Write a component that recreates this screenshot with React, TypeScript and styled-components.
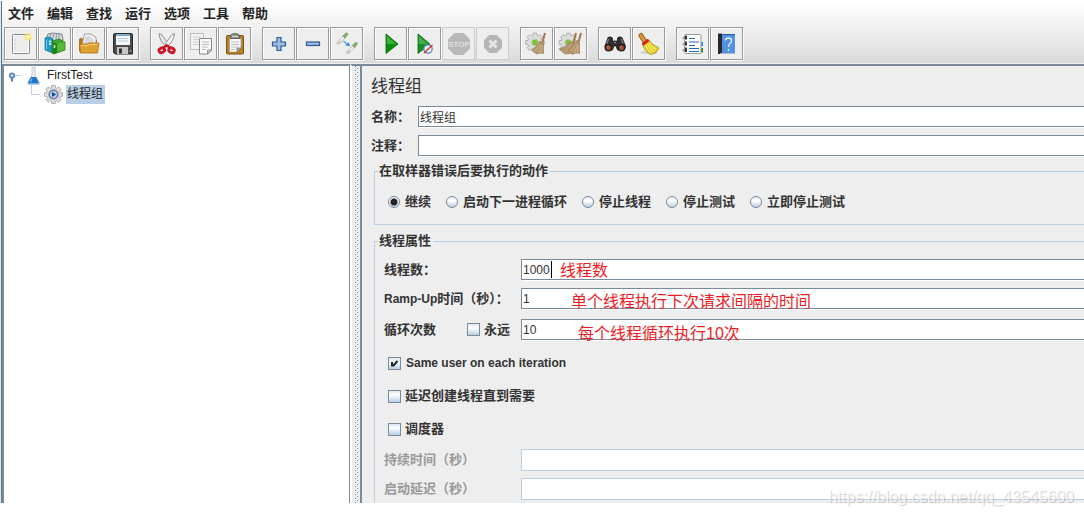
import React from "react";
import styled, { createGlobalStyle } from "styled-components";

const line = "#7a8a99";
const pale = "#b8cfe5";

const Global = createGlobalStyle`
  * { box-sizing: border-box; }
  body {
    margin: 0;
    background: #fff;
    color: #333;
    font: 13px/20px "Liberation Sans", "Noto Sans CJK SC", sans-serif;
  }
`;

const Frame = styled.div`
  position: relative;
  margin: 1px 0 12px;
  border-left: 1px solid #dfe8f0;
`;

const Window = styled.div`
  border-left: 1px solid #5f7487;
  overflow: hidden;
`;

const Header = styled.header`
  background: linear-gradient(#fff, #f2f2f2 40%, #dadada);
  border-bottom: 1px solid #eee;
`;

const MenuBar = styled.nav`
  display: flex;
  gap: 13px;
  height: 25px;
  padding: 1px 6px;
`;

const MenuItem = styled.button`
  padding: 0;
  border: 0;
  background: none;
  color: #222;
  font: bold 13px/20px "Liberation Sans", "Noto Sans CJK SC", sans-serif;
`;

const ToolBar = styled.div`
  display: flex;
  gap: 10px;
  padding: 1px 2px 3px;
`;

const ToolGroup = styled.div`
  display: flex;
  gap: 1px;
  padding-right: 1px;
`;

const ToolButton = styled.button`
  width: 33px;
  height: 33px;
  padding: 0;
  border: 1px solid #999;
  background: #eee;
  box-shadow: inset 1px 1px 0 #fff, 1px 1px 0 #fff;
  &:disabled {
    border-color: #ccc;
    box-shadow: none;
  }
  svg { display: block; }
`;

const Workspace = styled.main`
  display: flex;
`;

const TreePane = styled.aside`
  flex: 0 0 348px;
  border: solid ${line};
  border-width: 2px 1px 0 2px;
  background: #fff;
`;

const TreeList = styled.ul`
  margin: 0;
  padding: 0;
  list-style: none;
`;

const TreeRow = styled.div<{ $depth: number }>`
  display: flex;
  align-items: center;
  height: 19px;
  padding-left: ${(p) => (p.$depth ? 25 : 0)}px;
  font-size: 12px;
  color: #222;
  svg { flex: none; }
`;

const NodeLabel = styled.span<{ $selected?: boolean }>`
  height: 19px;
  margin-left: 3px;
  padding: 0 2px 0 1px;
  line-height: 19px;
  background: ${(p) => (p.$selected ? pale : "transparent")};
`;

const Splitter = styled.div`
  flex: 0 0 10px;
  padding-left: 3px;
  border-top: 2px solid ${line};
  border-left: 2px solid #fff;
  background: #eee;
`;

const Dots = styled.div`
  width: 4px;
  height: 100%;
  background:
    linear-gradient(${line}, ${line}) 0 0 / 4px 4px,
    #eee;
  background:
    conic-gradient(from 270deg at 1px 1px, ${line} 25%, transparent 0) 0 0 / 4px 4px,
    conic-gradient(from 270deg at 1px 1px, ${line} 25%, transparent 0) 2px 2px / 4px 4px;
`;

const Editor = styled.section`
  flex: 1;
  min-width: 0;
  padding: 10px 0 0 9px;
  border: solid ${line};
  border-width: 2px 0 0 2px;
  background: #eee;
`;

const Title = styled.h1`
  margin: 0 0 8px;
  font-size: 17px;
  font-weight: 400;
  line-height: 22px;
`;

const Field = styled.div<{ $label: number; $gap: number }>`
  display: grid;
  grid-template-columns: ${(p) => p.$label}px 1fr;
  align-items: center;
  margin-bottom: ${(p) => p.$gap}px;
`;

const Label = styled.label<{ $muted?: boolean }>`
  font-weight: bold;
  white-space: nowrap;
  color: ${(p) => (p.$muted ? "#999" : "#333")};
`;

const Latin = styled.span`
  font-size: 12px;
`;

const InputWrap = styled.div`
  position: relative;
  display: flex;
`;

const TextInput = styled.input`
  flex: 1;
  min-width: 0;
  height: 21px;
  padding: 0 1px;
  border: 1px solid ${line};
  border-right: 0;
  border-radius: 0;
  outline: 0;
  background: #fff;
  box-shadow: 1px 1px 0 #fff;
  color: #333;
  font: 12px/18px "Liberation Sans", "Noto Sans CJK SC", sans-serif;
  &:disabled {
    height: 22px;
    border-color: ${pale};
    box-shadow: none;
  }
`;

const Caret = styled.span`
  position: absolute;
  top: 2px;
  left: 30px;
  width: 1px;
  height: 17px;
  background: #000;
`;

const Note = styled.span<{ $left: number; $top: number }>`
  position: absolute;
  top: ${(p) => p.$top}px;
  left: ${(p) => p.$left}px;
  color: #ed1c24;
  font-size: 16px;
  line-height: 20px;
  white-space: nowrap;
`;

const Group = styled.fieldset<{ $open?: boolean }>`
  min-width: 0;
  margin: 0 0 ${(p) => (p.$open ? 0 : 6)}px 3px;
  padding: 0;
  border: solid ${pale};
  border-width: ${(p) => (p.$open ? "1px 0 0 1px" : "1px 0 1px 1px")};
`;

const Legend = styled.legend`
  margin-left: 3px;
  padding: 0 2px 0 1px;
  font-weight: bold;
`;

const Choices = styled.div`
  display: flex;
  gap: 15px;
  padding: 11px 13px 12px;
`;

const Choice = styled.label<{ $gap: number }>`
  display: flex;
  align-items: center;
  gap: ${(p) => p.$gap}px;
  height: 20px;
  font-weight: bold;
  white-space: nowrap;
`;

const Radio = styled.input`
  appearance: none;
  width: 12px;
  height: 12px;
  margin: 0;
  border: 1px solid ${line};
  border-radius: 50%;
  background: linear-gradient(#e4eef7, #fff 40%, #b8cfe5);
  &:checked {
    background:
      radial-gradient(circle, #222 3px, transparent 4px),
      linear-gradient(#e4eef7, #fff 40%, #b8cfe5);
  }
`;

const Box = styled.input`
  appearance: none;
  width: 13px;
  height: 13px;
  margin: 0;
  border: 1px solid ${line};
  background: linear-gradient(#dce8f3, #fff 35%, #b8cfe5);
`;

const BoxWrap = styled.span`
  position: relative;
  display: flex;
  svg {
    position: absolute;
    inset: 0;
    pointer-events: none;
  }
`;

const Properties = styled.div`
  padding: 8px 0 3px 9px;
`;

const LoopLabel = styled.div`
  display: flex;
  gap: 31px;
`;

const Checks = styled.div`
  display: flex;
  flex-direction: column;
  gap: 13px;
  padding: 0 0 10px 4px;
`;

const Watermark = styled.div`
  position: absolute;
  right: 10px;
  bottom: -4px;
  color: rgba(255, 255, 255, 0.7);
  font-size: 16px;
  line-height: 20px;
  text-shadow: 1px 1px 1px rgba(0, 0, 0, 0.2);
`;

const gearPath = (cx: number, cy: number, r: number) => {
  const points: string[] = [];
  for (let i = 0; i < 8; i++) {
    const mid = (i * Math.PI) / 4;
    [[-0.3, r - 2.2], [-0.2, r], [0.2, r], [0.3, r - 2.2]].forEach(([a, d]) => {
      points.push(`${(cx + d * Math.cos(mid + a)).toFixed(2)} ${(cy + d * Math.sin(mid + a)).toFixed(2)}`);
    });
  }
  return `M${points.join("L")}Z`;
};

const Gear = ({ cx, cy, r, children }: { cx: number; cy: number; r: number; children: React.ReactNode }) => (
  <g>
    <path d={gearPath(cx, cy, r)} fill="#dcdcdc" stroke="#a3a3a3" strokeWidth="0.8" strokeLinejoin="round" />
    {children}
  </g>
);

const Broom = ({ x, wide }: { x: number; wide?: boolean }) => (
  <g transform={`translate(${x} 0)`}>
    <path d="M24 6L21 17" stroke="#a5774a" strokeWidth="2" />
    <path
      d={wide ? "M19 14L22.500 17L22 27L18 26.500L13 27L7 22Q15 20 19 14Z" : "M19 14L22.500 16L22.500 26.500L19 26L15.500 27L10.500 23Q16 20 19 14Z"}
      fill="#b4956c"
      stroke="#94754c"
      strokeWidth="0.6"
    />
    <path d="M19.500 17L13.500 25M20.500 18L17.500 26M21.500 18L20.500 26" stroke="#d5bc95" strokeWidth="0.7" />
  </g>
);

const Dropper = ({ x, y }: { x: number; y: number }) => (
  <g transform={`translate(${x} ${y})`}>
    <path d="M1 12L1.500 10L7 4L9 6L3.500 11.500Z" fill="#f3f3ee" stroke="#aaa" strokeWidth="0.7" />
    <path d="M1.500 12L3.500 9L5.500 9.500L3.500 11.500Z" fill="#bdbbaa" />
    <path d="M7 3.500L9.500 6" stroke="#7a8f72" strokeWidth="1.200" />
    <path d="M9 3.800L10.500 2.300" stroke="#7fb068" strokeWidth="3.400" strokeLinecap="round" />
  </g>
);

const octagon = (r: number) => {
  const k = r * 0.42;
  return `M${17 - k} ${17 - r}H${17 + k}L${17 + r} ${17 - k}V${17 + k}L${17 + k} ${17 + r}H${17 - k}L${17 - r} ${17 + k}V${17 - k}Z`;
};

const icons: Record<string, React.ReactNode> = {
  new: (
    <>
      <rect x="8.500" y="7.500" width="17" height="19" rx="1" fill="#ededed" stroke="#8c8c8c" />
      <path d="M9.500 8.500V25.500H24.500V9" fill="none" stroke="#fff" />
      <path d="M10.500 13h1M10.500 17h1M10.500 21h1" stroke="#aaa" />
      <circle cx="24" cy="10" r="4" fill="#f7ee6c" opacity="0.5" />
      <circle cx="24" cy="10" r="2.500" fill="#f3e957" />
      <circle cx="24" cy="10" r="1.400" fill="#fffef0" />
    </>
  ),
  templates: (
    <>
      <path d="M8 12L10 7L15 6L24 7L25 13L15 16Z" fill="#d5dadb" stroke="#7c8688" />
      <path d="M11 12L13 7M14 13L16 7M18 12L18.500 7M21 12L21 7" stroke="#8b9799" />
      <path d="M7 11L11 10L15 12V26L7 23Z" fill="#1e9ac9" stroke="#0b6d98" strokeWidth="0.7" />
      <path d="M8.500 12.500V22.500" stroke="#73d0ef" />
      <path d="M11 14.500H13.500M11 17H13.500" stroke="#e8fbff" strokeWidth="1.400" />
      <path d="M14 14L21 12L27 15V23L16 27L14 26Z" fill="#3da72b" stroke="#1d7214" strokeWidth="0.7" />
      <path d="M14.500 15L19 17V25.500L16 26.500L14.500 26Z" fill="#1f8016" />
      <path d="M16.500 18V21" stroke="#d5f3c9" strokeWidth="1.500" />
      <path d="M19.500 16.500L26.500 15.500V22.500L19.500 25Z" fill="#55ba3c" />
    </>
  ),
  open: (
    <>
      <path d="M7.500 12L9 11L12 13H24.500V25.500H9L7.500 24Z" fill="#b87a15" stroke="#916012" strokeWidth="0.7" />
      <path d="M10 18L12.500 7H19L24 10.500L24 19Z" fill="#f7f7f7" stroke="#888" strokeWidth="0.8" />
      <path d="M13.500 10H19M13 12H21M12.500 14H21.500M12 16H22" stroke="#aaa" strokeWidth="0.8" />
      <path d="M7.500 17H15L17 16H27L25.500 26H8.500Z" fill="#dfa12f" stroke="#a96f12" strokeWidth="0.8" />
      <path d="M9 18.500H15.500L17.500 17.500H25.500" fill="none" stroke="#f4cd79" />
    </>
  ),
  save: (
    <>
      <path d="M7.500 8Q7.500 6.500 9 6.500H25Q26.500 6.500 26.500 8V27H9L7.500 25.500Z" fill="#4c4c4c" stroke="#2a2a2a" />
      <rect x="10" y="7" width="14" height="11" fill="#f0f6fb" />
      <path d="M10 8H24" stroke="#7cabce" strokeWidth="2" />
      <path d="M12 11.500H22M12 14H22" stroke="#bdcbd6" />
      <rect x="11" y="20" width="11" height="7" fill="#c7c7c7" />
      <rect x="13" y="21.500" width="3" height="5" fill="#333" />
      <rect x="23.500" y="23" width="2" height="2" fill="#888" />
    </>
  ),
  cut: (
    <>
      <path d="M9 6.500L11.500 7.500L18.500 17L16.500 20Q9.500 14 9 6.500Z" fill="#e7e7e7" stroke="#888" strokeWidth="0.9" />
      <path d="M24.500 6.500L22 7.500L15 17L17 20Q24 14 24.500 6.500Z" fill="#f4f4f4" stroke="#888" strokeWidth="0.9" />
      <ellipse cx="11.800" cy="23.300" rx="2.900" ry="2.200" fill="none" stroke="#cf1323" strokeWidth="2.800" transform="rotate(-28 11.800 23.300)" />
      <ellipse cx="21.500" cy="23.300" rx="2.900" ry="2.200" fill="none" stroke="#cf1323" strokeWidth="2.800" transform="rotate(28 21.500 23.300)" />
      <path d="M13.500 20.500L16.700 18.500L20 20.500" fill="none" stroke="#cf1323" strokeWidth="2.400" />
    </>
  ),
  copy: (
    <>
      <rect x="6.500" y="6.500" width="13" height="16" fill="#f5f5f5" stroke="#bbb" />
      <path d="M9 10H17M9 12.500H17M9 15H15M9 17.500H15" stroke="#ccc" />
      <path d="M15.500 11.500H27.500V23L23.500 27H15.500Z" fill="#f9f9f9" stroke="#888" />
      <path d="M27.500 23H23.500V27Z" fill="#ccc" stroke="#777" strokeWidth="0.7" />
      <path d="M18 15H25M18 17.500H25M18 20H24M18 22.500H22" stroke="#bbb" />
    </>
  ),
  paste: (
    <>
      <rect x="8.500" y="8.500" width="17" height="18.500" rx="1" fill="#bd801d" stroke="#7c510d" />
      <path d="M11.500 11.500H23V21L19 25H11.500Z" fill="#fafafa" stroke="#999" strokeWidth="0.7" />
      <path d="M23 21H19V25Z" fill="#bbb" stroke="#666" strokeWidth="0.7" />
      <path d="M13 15H21M13 17.500H21M13 20H20M13 22.500H17" stroke="#bbb" />
      <path d="M13 7.500Q17 5 21 7.500L22 11.500H12Z" fill="#8e948b" stroke="#555" strokeWidth="0.8" />
      <path d="M14 9.500H20" stroke="#d6d8d3" />
    </>
  ),
  plus: <path d="M15 10.500H19V15H23.500V19H19V23.500H15V19H10.500V15H15Z" fill="#9ebddf" stroke="#2a5899" strokeWidth="1.200" />,
  minus: <rect x="10.500" y="15" width="13" height="3.500" fill="#9ebddf" stroke="#2a5899" strokeWidth="1.200" />,
  toggle: (
    <>
      <Dropper x={6} y={5} />
      <Dropper x={15.5} y={14.5} />
      <path d="M13.500 14L17 17.200" stroke="#5ba3f2" strokeWidth="1.500" />
      <path d="M19.800 19.200L15.500 18.500L18.800 15.200Z" fill="#2c80ea" />
    </>
  ),
  start: (
    <>
      <path d="M12 7L24 17L12 26.500Z" fill="#078f0c" stroke="#046607" strokeWidth="0.8" />
      <path d="M12.800 9V17H22Z" fill="#3cb23d" />
    </>
  ),
  startNoPauses: (
    <>
      <path d="M10 7L22 17L10 26.500Z" fill="#14901c" stroke="#066b0a" strokeWidth="0.8" />
      <path d="M10.800 9V17H20Z" fill="#4cab4d" />
      <circle cx="20" cy="22" r="4.200" fill="#e8f1fb" stroke="#4a88c4" strokeWidth="1.300" />
      <path d="M16 26L24.500 18" stroke="#e0322b" strokeWidth="1.500" />
    </>
  ),
  stop: (
    <>
      <path d={octagon(11)} fill="#b8b8b8" />
      <text x="17" y="20" textAnchor="middle" fontSize="8" fontWeight="bold" fontFamily="Liberation Sans, sans-serif" fill="#dedede">STOP</text>
    </>
  ),
  shutdown: (
    <>
      <path d={octagon(9)} fill="#b5b5b5" />
      <path d="M13.500 13.500L20.500 20.500M20.500 13.500L13.500 20.500" stroke="#e6e6e6" strokeWidth="3" />
    </>
  ),
  clear: (
    <>
      <Gear cx={15} cy={15.5} r={9.5}><circle cx="15" cy="15.500" r="3.200" fill="#7cc22e" stroke="#b0c8a0" /></Gear>
      <Broom x={1} />
    </>
  ),
  clearAll: (
    <>
      <Gear cx={14.5} cy={15.5} r={9.5}><circle cx="14" cy="15.500" r="3" fill="#7cc22e" stroke="#b0c8a0" /></Gear>
      <Broom x={-2} wide />
      <Broom x={3} />
    </>
  ),
  search: (
    <>
      <path d="M7 19L10 10.500Q12.500 9 14.500 11V14H19.500V11Q21.500 9 24 10.500L27.500 19L26 23H19.500L18 19H16L14.500 23H8Z" fill="#303030" stroke="#181818" strokeWidth="0.7" />
      <path d="M10.500 12L9 17M23.500 12L25 17M16 15.500H18" stroke="#999" />
      <circle cx="10.500" cy="20.500" r="4" fill="#222" />
      <circle cx="23.500" cy="20.500" r="4" fill="#222" />
      <circle cx="10.500" cy="20.800" r="2.400" fill="#a45128" />
      <circle cx="23.500" cy="20.800" r="2.400" fill="#a45128" />
      <path d="M9 20L10.500 19M22 20L23.500 19" stroke="#e0a27d" />
    </>
  ),
  reset: (
    <>
      <ellipse cx="17" cy="25.500" rx="9" ry="1.800" fill="#d2d2d2" />
      <path d="M9 8.500L12.500 14" stroke="#9f6215" strokeWidth="5" strokeLinecap="round" />
      <path d="M9 8.500L12.500 14" stroke="#d99a3c" strokeWidth="3" strokeLinecap="round" />
      <path d="M10.500 17L16.500 12.500Q20 18 27 21Q25 26 19 27.500Q12 24 10.500 17Z" fill="#e6d02c" stroke="#a68d0e" strokeWidth="0.8" />
      <path d="M13.500 18Q16 23 19 26M15.500 17Q18 21 21.500 24.500M17 16Q20 20 24 22.500" fill="none" stroke="#fff59a" strokeWidth="0.9" />
      <path d="M10.500 17.500L16.500 13" stroke="#cf2a1c" strokeWidth="3" />
    </>
  ),
  log: (
    <>
      <path d="M25 15V19" stroke="#2c8dff" strokeWidth="4" />
      <path d="M25 21V25.500" stroke="#129313" strokeWidth="4" />
      <rect x="8.500" y="7.500" width="16.500" height="19" rx="1" fill="#fff" stroke="#999" />
      <path d="M13 11.500H19M13 15H23M13 18.500H19M13 21.500H23M13 24.500H23" stroke="#2566c2" />
      <path d="M6.500 11H10M6.500 17H10M6.500 23H10" stroke="#888" strokeWidth="1.500" />
      <path d="M10 8.500V12.500M10 14.500V18.500M10 20.500V25" stroke="#222" strokeWidth="1.800" />
    </>
  ),
  help: (
    <>
      <path d="M8 7H25V27H8Z" fill="#5292e0" />
      <path d="M8 6.500H12V27H8Z" fill="#242a33" />
      <path d="M12 7H25V8H12Z" fill="#2a5c9d" />
      <path d="M10 26.500H25" stroke="#aeb8c2" />
      <path d="M15.500 13.500Q15.500 11 18.500 11Q21.500 11 21.500 13.500Q21.500 15.500 20 16.500Q18.500 17.500 18.500 20M18.500 22V24" fill="none" stroke="#e7f1ff" strokeWidth="1.400" />
    </>
  ),
};

const toolGroups: [string, string][][] = [
  [["new", "新建"], ["templates", "模板"], ["open", "打开"], ["save", "保存"]],
  [["cut", "剪切"], ["copy", "复制"], ["paste", "粘贴"]],
  [["plus", "展开"], ["minus", "折叠"], ["toggle", "切换"]],
  [["start", "启动"], ["startNoPauses", "不停顿开始"], ["stop", "停止"], ["shutdown", "关闭"]],
  [["clear", "清除"], ["clearAll", "清除全部"]],
  [["search", "查找"], ["reset", "重置查找"]],
  [["log", "函数助手"], ["help", "帮助"]],
];

const menus = ["文件", "编辑", "查找", "运行", "选项", "工具", "帮助"];
const actions = ["继续", "启动下一进程循环", "停止线程", "停止测试", "立即停止测试"];

const RootIcon = () => (
  <svg width="39" height="19" viewBox="4 66 39 19">
    <path d="M12 78V81.500" stroke="#5f7ea6" strokeWidth="2" />
    <path d="M14 75.500H21" stroke={pale} />
    <circle cx="12" cy="75.500" r="2.200" fill="#dde8f5" stroke="#6382bf" strokeWidth="1.800" />
    <path d="M31.500 67.500H35.500M32 68V75L28 82Q27 84.500 29 84.500H38Q40 84.500 39 82L35 75V68" fill="#eef1f4" stroke="#b9c1c9" strokeWidth="0.9" />
    <path d="M31 77H36L39.200 83.500H27.800Z" fill="#1878d2" />
    <path d="M32 78.500L30.500 82" stroke="#80bff5" strokeWidth="1.200" />
  </svg>
);

const ThreadGroupIcon = () => (
  <svg width="34" height="19" viewBox="29 85 34 19">
    <path d="M31.500 85V94.500H40" fill="none" stroke={pale} />
    <Gear cx={53.5} cy={94.5} r={9.2}>
      <circle cx="53.500" cy="94.500" r="4.300" fill="#b9cce8" stroke="#6c7f9f" strokeWidth="1.600" />
      <path d="M52 92L56 94.500L52 97Z" fill="#15478c" />
    </Gear>
  </svg>
);

export default function App() {
  return (
    <>
      <Global />
      <Frame>
        <Window>
          <Header>
            <MenuBar>
              {menus.map((m) => (
                <MenuItem key={m}>{m}</MenuItem>
              ))}
            </MenuBar>
            <ToolBar>
              {toolGroups.map((group, i) => (
                <ToolGroup key={i}>
                  {group.map(([id, name]) => (
                    <ToolButton key={id} aria-label={name} disabled={id === "stop" || id === "shutdown"}>
                      <svg width="31" height="31" viewBox="1 1 31 31">{icons[id]}</svg>
                    </ToolButton>
                  ))}
                </ToolGroup>
              ))}
            </ToolBar>
          </Header>
          <Workspace>
            <TreePane>
              <TreeList>
                <li>
                  <TreeRow $depth={0}>
                    <RootIcon />
                    <NodeLabel>FirstTest</NodeLabel>
                  </TreeRow>
                  <TreeList>
                    <li>
                      <TreeRow $depth={1}>
                        <ThreadGroupIcon />
                        <NodeLabel $selected>线程组</NodeLabel>
                      </TreeRow>
                    </li>
                  </TreeList>
                </li>
              </TreeList>
            </TreePane>
            <Splitter>
              <Dots />
            </Splitter>
            <Editor>
              <Title>线程组</Title>
              <Field $label={47} $gap={8}>
                <Label htmlFor="name">名称：</Label>
                <InputWrap><TextInput id="name" defaultValue="线程组" /></InputWrap>
              </Field>
              <Field $label={47} $gap={5}>
                <Label htmlFor="comment">注释：</Label>
                <InputWrap><TextInput id="comment" /></InputWrap>
              </Field>
              <Group>
                <Legend>在取样器错误后要执行的动作</Legend>
                <Choices>
                  {actions.map((a, i) => (
                    <Choice key={a} $gap={5}>
                      <Radio type="radio" name="onError" defaultChecked={i === 0} />
                      {a}
                    </Choice>
                  ))}
                </Choices>
              </Group>
              <Group $open>
                <Legend>线程属性</Legend>
                <Properties>
                  <Field $label={137} $gap={8}>
                    <Label htmlFor="threads">线程数：</Label>
                    <InputWrap>
                      <TextInput id="threads" defaultValue="1000" />
                      <Caret />
                      <Note $left={39} $top={2}>线程数</Note>
                    </InputWrap>
                  </Field>
                  <Field $label={137} $gap={10}>
                    <Label htmlFor="ramp"><Latin>Ramp-Up</Latin>时间（秒）：</Label>
                    <InputWrap>
                      <TextInput id="ramp" defaultValue="1" />
                      <Note $left={50} $top={4}>单个线程执行下次请求间隔的时间</Note>
                    </InputWrap>
                  </Field>
                  <Field $label={137} $gap={13}>
                    <LoopLabel>
                      <Label htmlFor="loops">循环次数</Label>
                      <Choice $gap={4}>
                        <Box type="checkbox" />
                        永远
                      </Choice>
                    </LoopLabel>
                    <InputWrap>
                      <TextInput id="loops" defaultValue="10" />
                      <Note $left={57} $top={5}>每个线程循环执行10次</Note>
                    </InputWrap>
                  </Field>
                  <Checks>
                    <Choice $gap={5}>
                      <BoxWrap>
                        <Box type="checkbox" defaultChecked />
                        <svg width="13" height="13" viewBox="0 0 13 13">
                          <path d="M4 5V9.500M5 9L9.500 4" fill="none" stroke="#222" strokeWidth="2" />
                        </svg>
                      </BoxWrap>
                      <Latin>Same user on each iteration</Latin>
                    </Choice>
                    <Choice $gap={4}><Box type="checkbox" />延迟创建线程直到需要</Choice>
                    <Choice $gap={4}><Box type="checkbox" />调度器</Choice>
                  </Checks>
                  <Field $label={137} $gap={7}>
                    <Label $muted htmlFor="duration">持续时间（秒）</Label>
                    <InputWrap><TextInput id="duration" disabled /></InputWrap>
                  </Field>
                  <Field $label={137} $gap={0}>
                    <Label $muted htmlFor="delay">启动延迟（秒）</Label>
                    <InputWrap><TextInput id="delay" disabled /></InputWrap>
                  </Field>
                </Properties>
              </Group>
            </Editor>
          </Workspace>
        </Window>
        <Watermark>https://blog.csdn.net/qq_43545600</Watermark>
      </Frame>
    </>
  );
}
